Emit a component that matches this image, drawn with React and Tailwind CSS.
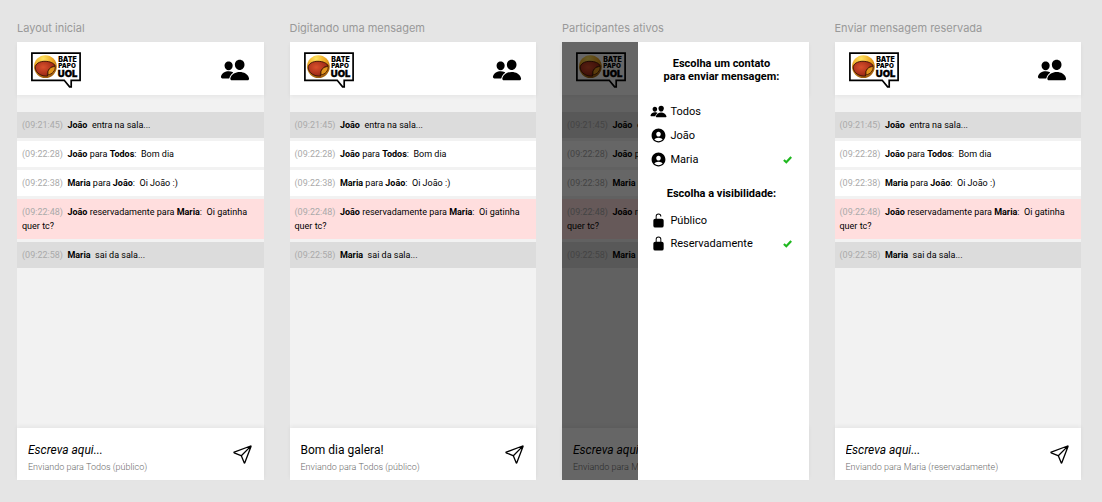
import { useId, useState } from "react";
import {
  IoPeople,
  IoPersonCircle,
  IoLockOpen,
  IoLockClosed,
  IoPaperPlaneOutline,
} from "react-icons/io5";

const messages = [
  { time: "09:21:45", from: "João", text: "entra na sala...", type: "status" },
  { time: "09:22:28", from: "João", to: "Todos", text: "Bom dia", type: "public" },
  { time: "09:22:38", from: "Maria", to: "João", text: "Oi João :)", type: "public" },
  { time: "09:22:48", from: "João", to: "Maria", text: "Oi gatinha quer tc?", type: "private" },
  { time: "09:22:58", from: "Maria", text: "sai da sala...", type: "status" },
];

const backgrounds = {
  status: "bg-[#dcdcdc]",
  public: "bg-white",
  private: "bg-[#ffdede]",
};

function Logo() {
  const id = useId();
  return (
    <svg className="h-9 w-[50px] shrink-0" viewBox="0 0 50 36" role="img" aria-label="Bate Papo UOL">
      <defs>
        <radialGradient id={id + "gold"} cx="0.4" cy="0.15" r="0.95">
          <stop offset="0" stopColor="#ffe460" />
          <stop offset="0.45" stopColor="#eda420" />
          <stop offset="1" stopColor="#8a4a0a" />
        </radialGradient>
        <radialGradient id={id + "red"} cx="0.4" cy="0.4" r="0.75">
          <stop offset="0" stopColor="#d9502c" />
          <stop offset="1" stopColor="#8c1d10" />
        </radialGradient>
      </defs>
      <path d="M0.9 1.1H49.1V28.3H40.2V34.8H38.6L33.2 28.3H0.9Z" fill="#fff" stroke="#000" strokeWidth="1.7" />
      <circle cx="14.4" cy="14.6" r="11.4" fill={"url(#" + id + "gold)"} />
      <path
        d="M4.2 16C4 11.5 9 9.2 14 9.3C19 9.4 23 11 24.2 14C20.6 14.2 18 16.5 17 19.3C16.4 21 16.2 22.4 16.6 24C10 24.6 5 21 4.2 16Z"
        fill={"url(#" + id + "red)"}
        stroke="#3b1206"
        strokeWidth="0.9"
      />
      <path
        d="M17.2 22.8C15.8 18.2 19.2 14.6 24.3 14.5C24.3 18.8 21.2 22.3 17.2 22.8Z"
        fill="#e2951d"
        stroke="#4a1a06"
        strokeWidth="0.9"
      />
      <g fontFamily="Inter, sans-serif" fontWeight="900" fill="#000">
        <text x="27.2" y="9.8" fontSize="7">BATE</text>
        <text x="27.2" y="16" fontSize="6.3">PAPO</text>
        <text x="26.8" y="24.8" fontSize="9.5" stroke="#000" strokeWidth="0.3">UOL</text>
      </g>
    </svg>
  );
}

function Check() {
  return (
    <svg className="mr-px h-2 w-[9px] shrink-0" viewBox="0 0 9 8" aria-hidden="true">
      <path d="M0.9 4L3.3 6.2L8.2 1" fill="none" stroke="#1fb81f" strokeWidth="2.2" />
    </svg>
  );
}

function Message({ message }) {
  const { time, from, to, text, type } = message;
  return (
    <li className={"px-[5px] py-[6px] text-[9px] leading-[14px] text-black " + backgrounds[type]}>
      <time className="text-[#aaaaaa]">({time})</time>
      {"\u00a0 "}
      <strong className="font-bold">{from}</strong>
      {to && (
        <>
          {type === "private" ? " reservadamente para " : " para "}
          <strong className="font-bold">{to}</strong>:
        </>
      )}
      {"\u00a0 "}
      {text}
    </li>
  );
}

function Option({ icon: Icon, iconClass, label, selected = false }) {
  return (
    <button type="button" aria-pressed={selected} className="flex h-[17px] w-full items-center gap-1 text-left text-[11px] leading-4">
      <span className="flex w-4 shrink-0 justify-center">
        <Icon className={"shrink-0 " + iconClass} />
      </span>
      <span className="grow">{label}</span>
      {selected && <Check />}
    </button>
  );
}

function ParticipantsPanel() {
  return (
    <div className="absolute inset-0 flex bg-black/60">
      <aside className="ml-auto w-[69%] bg-white pt-[15px] pr-4 pl-3">
        <h3 className="text-center text-[11px] leading-[13px] font-bold">
          Escolha um contato
          <br />
          para enviar mensagem:
        </h3>
        <div className="mt-5 flex flex-col gap-[7px]">
          <Option icon={IoPeople} iconClass="size-[17px]" label="Todos" />
          <Option icon={IoPersonCircle} iconClass="size-[17px]" label="João" />
          <Option icon={IoPersonCircle} iconClass="size-[17px]" label="Maria" selected />
        </div>
        <h3 className="mt-[19px] text-center text-[11px] leading-[13px] font-bold">Escolha a visibilidade:</h3>
        <div className="mt-3 flex flex-col gap-[6px]">
          <Option icon={IoLockOpen} iconClass="size-[15px]" label="Público" />
          <Option icon={IoLockClosed} iconClass="size-[15px]" label="Reservadamente" selected />
        </div>
      </aside>
    </div>
  );
}

function Phone({ title, draft = "", recipient, panelOpen = false }) {
  const id = useId();
  const [value, setValue] = useState(draft);
  return (
    <section className="flex min-w-0 flex-col">
      <h2 className="mb-[6px] font-[Inter,sans-serif] text-[11px] leading-4 text-[#999999]">{title}</h2>
      <div className="relative flex min-h-[438px] grow flex-col bg-[#f2f2f2]">
        <header className="flex items-center justify-between bg-white px-[14px] pt-[10px] pb-[7px] shadow-[0_2px_4px_rgba(0,0,0,0.05)]">
          <Logo />
          <button type="button" aria-label="Participantes">
            <IoPeople className="size-[30px]" />
          </button>
        </header>
        <ul className="mt-[17px] flex grow flex-col gap-[3px]">
          {messages.map((message) => (
            <Message key={message.time} message={message} />
          ))}
        </ul>
        <form
          onSubmit={(event) => event.preventDefault()}
          className="flex items-center justify-between bg-white pt-[14px] pr-[11px] pb-[6px] pl-[11px] shadow-[0_-2px_4px_rgba(0,0,0,0.05)]"
        >
          <div className="flex min-w-0 grow flex-col gap-[3px]">
            <input
              id={id}
              type="text"
              value={value}
              onChange={(event) => setValue(event.target.value)}
              placeholder="Escreva aqui..."
              className="w-full text-[12px] leading-4 text-black outline-none placeholder:text-black placeholder:italic"
            />
            <label htmlFor={id} className="text-[9px] leading-[13px] font-light whitespace-nowrap text-[#6b6b6b]">
              Enviando para {recipient}
            </label>
          </div>
          <button type="submit" aria-label="Enviar" className="mb-2">
            <IoPaperPlaneOutline className="size-[21px]" />
          </button>
        </form>
        {panelOpen && <ParticipantsPanel />}
      </div>
    </section>
  );
}

export default function App() {
  return (
    <main className="grid min-h-screen grid-cols-4 gap-[26px] bg-[#e5e5e5] pt-5 pr-[21px] pb-[22px] pl-[17px] font-[Roboto,sans-serif] text-black">
      <Phone title="Layout inicial" recipient="Todos (público)" />
      <Phone title="Digitando uma mensagem" draft="Bom dia galera!" recipient="Todos (público)" />
      <Phone title="Participantes ativos" recipient="Maria (reservadamente)" panelOpen />
      <Phone title="Enviar mensagem reservada" recipient="Maria (reservadamente)" />
    </main>
  );
}
